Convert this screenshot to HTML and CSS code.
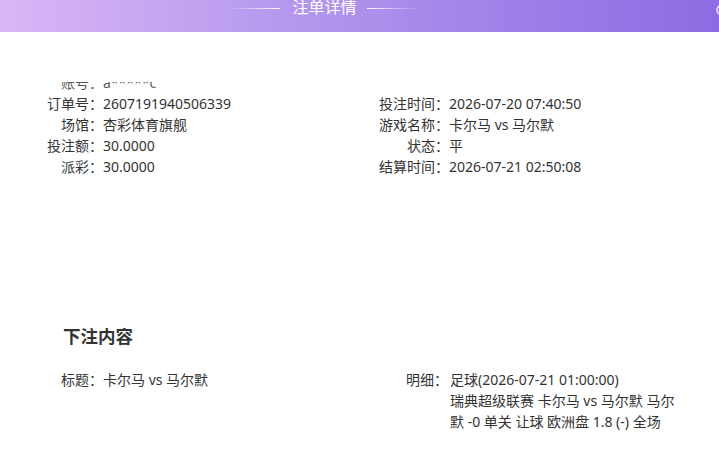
FILE: index.html
```html
<!DOCTYPE html>
<html lang="zh">
<head>
<meta charset="utf-8">
<link rel="stylesheet" href="styles.css">
</head>
<body>
<div class="dialog">
  <div class="header">
    <span class="line line-left"></span>
    <span class="title">注单详情</span>
    <span class="line line-right"></span>
    <span class="close"></span>
  </div>
  <div class="body">
    <div class="clip">
      <div class="grid">
        <div class="col left">
          <div class="row"><span class="label">账号：</span><span class="value">a*****c</span></div>
        </div>
        <div class="col right">
          <div class="row"><span class="label"></span><span class="value"></span></div>
        </div>
      </div>
    </div>
    <div class="grid">
      <div class="col left">
        <div class="row"><span class="label">订单号：</span><span class="value">2607191940506339</span></div>
        <div class="row"><span class="label">场馆：</span><span class="value">杏彩体育旗舰</span></div>
        <div class="row"><span class="label">投注额：</span><span class="value">30.0000</span></div>
        <div class="row"><span class="label">派彩：</span><span class="value">30.0000</span></div>
      </div>
      <div class="col right">
        <div class="row"><span class="label">投注时间：</span><span class="value">2026-07-20 07:40:50</span></div>
        <div class="row"><span class="label">游戏名称：</span><span class="value">卡尔马 vs 马尔默</span></div>
        <div class="row"><span class="label">状态：</span><span class="value">平</span></div>
        <div class="row"><span class="label">结算时间：</span><span class="value">2026-07-21 02:50:08</span></div>
      </div>
    </div>
    <h2 class="section-title">下注内容</h2>
    <div class="grid content">
      <div class="col left">
        <div class="row"><span class="label">标题：</span><span class="value">卡尔马 vs 马尔默</span></div>
      </div>
      <div class="col right">
        <div class="row"><span class="label">明细：</span><span class="value wrap"><span class="detail-head">足球(2026-07-21 01:00:00)</span>瑞典超级联赛 卡尔马 vs 马尔默 马尔默 -0 单关 让球 欧洲盘 1.8 (-) 全场</span></div>
      </div>
    </div>
  </div>
</div>
</body>
</html>
```
FILE: styles.css
```css
* { box-sizing: border-box; }
html, body {
  margin: 0;
  padding: 0;
  background: #fff;
}
body {
  font-family: "Noto Sans", "Noto Sans CJK SC", sans-serif;
  color: #333;
  font-size: 14px;
  width: 719px;
  height: 469px;
  overflow: hidden;
}
.header {
  position: relative;
  height: 32px;
  background: linear-gradient(90deg, #dab6f6 0%, #b99cee 35%, #a688ea 60%, #8d6be3 100%);
  display: flex;
  justify-content: center;
  align-items: flex-start;
  padding-right: 70px;
}
.title {
  color: #fff;
  font-size: 16px;
  line-height: 16px;
  margin: -1px 10px 0 12px;
}
.line {
  display: block;
  height: 1px;
  margin-top: 8px;
}
.line-left {
  width: 52px;
  background: linear-gradient(90deg, rgba(255,255,255,0), rgba(255,255,255,0.95));
}
.line-right {
  width: 54px;
  background: linear-gradient(90deg, rgba(255,255,255,0.95), rgba(255,255,255,0));
}
.close {
  position: absolute;
  right: -10px;
  top: 4px;
  width: 13px;
  height: 12px;
  border-radius: 50%;
  border: 2px solid rgba(255,255,255,0.7);
}
.clip {
  margin-top: 50px;
  height: 11px;
  overflow: hidden;
  display: flex;
  flex-direction: column;
  justify-content: flex-end;
  opacity: 0.8;
}
.clip .grid {
  flex: none;
}
.grid {
  display: grid;
  grid-template-columns: 380px 1fr;
}
.col.left {
  padding-left: 46px;
}
.row {
  display: flex;
  line-height: 21px;
  height: 21px;
}
.left .label {
  width: 57px;
  text-align: right;
  flex: none;
}
.right .label {
  width: 70px;
  text-align: right;
  flex: none;
  margin-left: -1px;
}
.value {
  white-space: nowrap;
}
.section-title {
  margin: 147px 0 0 63px;
  font-size: 17.5px;
  line-height: 24px;
  font-weight: 700;
  color: #333;
}
.content {
  margin-top: 21px;
}
.content .left {
  padding-left: 61px;
}
.content .left .label {
  width: 42px;
  text-align: left;
}
.content .right {
  padding-left: 26px;
}
.content .right .label {
  width: 44px;
  text-align: left;
  margin-left: 0;
}
.content .row {
  height: auto;
}
.value.wrap {
  white-space: normal;
  width: 226px;
}
.detail-head {
  display: block;
}
```
